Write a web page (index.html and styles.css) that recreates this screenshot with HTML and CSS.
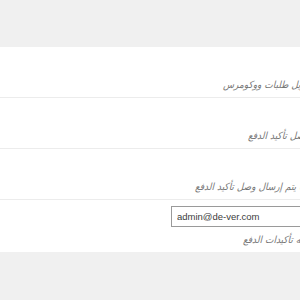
FILE: index.html
```html
<!DOCTYPE html>
<html lang="ar">
<head>
    <meta charset="UTF-8">
    <title>إعدادات تأكيد الدفع</title>
    <link rel="stylesheet" href="styles.css">
</head>
<body>
    <div class="top-bar"></div>

    <!-- Settings rows -->
    <div class="panel">
        <div class="row">
            <p class="desc desc-1">تفعيل إشعارات البريد عند تحويل طلبات ووكومرس</p>
        </div>
        <div class="row">
            <p class="desc desc-2">إرسال بريد للعميل عند قبول وصل تأكيد الدفع</p>
        </div>
        <div class="row">
            <p class="desc desc-3">إرسال إشعار إلى المدير عندما يتم إرسال وصل تأكيد الدفع</p>
        </div>
        <div class="row row-last">
            <input class="email" type="text" value="admin@de-ver.com">
            <p class="desc desc-4">البريد الإلكتروني الذي سترسل إليه تأكيدات الدفع</p>
        </div>
    </div>
</body>
</html>
```

FILE: styles.css
```css
/* Base */
html, body {
    overflow: hidden;
}

body {
    margin: 0;
    background-color: #f0f0f0;
    font-family: "DejaVu Sans", sans-serif;
}

.top-bar {
    height: 47px;
}

/* White settings panel */
.panel {
    background-color: #fff;
    width: 600px;
}

.row {
    height: 50px;
    border-bottom: 1px solid #ececec;
}

.row-last {
    height: 52px;
    border-bottom: none;
    padding-top: 6px;
    box-sizing: border-box;
}

/* Descriptions are RTL, visible from their end on the left */
.desc {
    margin: 0;
    padding-top: 30px;
    direction: rtl;
    text-align: left;
    font-family: "DejaVu Sans Condensed", "DejaVu Sans", sans-serif;
    font-size: 10px;
    line-height: 16px;
    font-style: italic;
    color: #777;
    white-space: nowrap;
}

.desc-1 { margin-left: 223px; }
.desc-2 { margin-left: 248px; }
.desc-3 { margin-left: 195px; }
.desc-4 {
    margin-left: 243px;
    padding-top: 5px;
}

/* Email field */
.email {
    display: block;
    margin: 0 0 0 171px;
    width: 260px;
    height: 21px;
    box-sizing: border-box;
    padding: 0 5px;
    border: 1px solid #9a9a9a;
    font-family: "Liberation Sans", Arial, sans-serif;
    font-size: 9.5px;
    color: #3c3c3c;
    background: #fff;
}
```
